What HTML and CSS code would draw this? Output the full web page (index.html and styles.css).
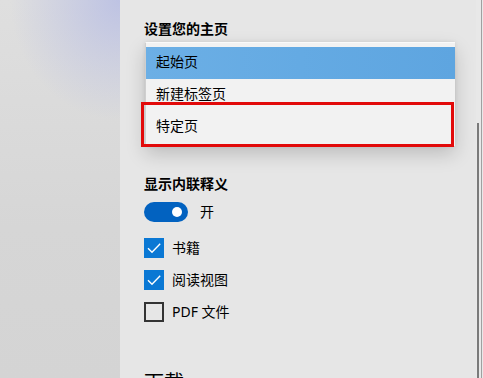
FILE: index.html
```html
<!DOCTYPE html>
<html lang="zh-CN">
<head>
<meta charset="utf-8">
<title>设置</title>
<link rel="stylesheet" href="styles.css">
</head>
<body>
<div class="screen">
  <div class="backdrop"></div>
  <main class="panel">
    <h2 class="heading">设置您的主页</h2>
    <div class="dropdown">
      <div class="option selected">起始页</div>
      <div class="option">新建标签页</div>
      <div class="option">特定页</div>
      <div class="highlight-box"></div>
    </div>

    <h2 class="heading heading-second">显示内联释义</h2>
    <div class="toggle-row">
      <span class="toggle"><span class="knob"></span></span>
      <span class="label">开</span>
    </div>
    <div class="checks">
      <label class="check-row">
        <span class="box checked">
          <svg viewBox="0 0 20 20" width="20" height="20"><path d="M4 10.2 L8 14.2 L16.2 5.8" fill="none" stroke="#fff" stroke-width="1.4"/></svg>
        </span>
        <span class="label">书籍</span>
      </label>
      <label class="check-row">
        <span class="box checked">
          <svg viewBox="0 0 20 20" width="20" height="20"><path d="M4 10.2 L8 14.2 L16.2 5.8" fill="none" stroke="#fff" stroke-width="1.4"/></svg>
        </span>
        <span class="label">阅读视图</span>
      </label>
      <label class="check-row">
        <span class="box"></span>
        <span class="label">PDF 文件</span>
      </label>
    </div>

    <h2 class="section-title">下载</h2>
  </main>
  <div class="scrollbar">
    <div class="thumb"></div>
    <div class="edge"></div>
  </div>
</div>
</body>
</html>
```

FILE: styles.css
```css
html, body {
  margin: 0;
  padding: 0;
  width: 483px;
  height: 378px;
  overflow: hidden;
}

body {
  font-family: "Noto Sans", "Noto Sans CJK SC", sans-serif;
  color: #000;
}

.screen {
  display: flex;
  width: 483px;
  height: 378px;
  overflow: hidden;
}

.backdrop {
  width: 120px;
  flex: none;
  background:
    radial-gradient(ellipse 110px 120px at 120px 0px, rgba(184, 190, 228, 0.85), rgba(184, 190, 228, 0) 100%),
    linear-gradient(180deg, #dfdfdf 0%, #d6d6d6 60%, #d4d4d4 100%);
}

.panel {
  width: 356px;
  flex: none;
  background: #e6e6e6;
  padding: 18px 0 0 24px;
  box-sizing: border-box;
  display: flex;
  flex-direction: column;
  align-items: flex-start;
}

.heading {
  margin: 0;
  font-size: 14px;
  line-height: 20px;
  font-weight: 600;
  font-family: "Noto Sans CJK SC", sans-serif;
}

.heading-second {
  margin-top: 27px;
}

.dropdown {
  position: relative;
  margin: 4px 0 0 1px;
  width: 310px;
  padding: 4px 0 3px;
  background: #f2f2f2;
  border-left: 1px solid #cfcfcf;
  box-sizing: border-box;
  box-shadow: 0 8px 18px rgba(0, 0, 0, 0.18), 0 0 4px rgba(0, 0, 0, 0.08);
  border-top: 1px solid #fafafa;
}

.option {
  height: 32px;
  line-height: 28px;
  padding-left: 10px;
  font-size: 14px;
  font-family: "Noto Sans CJK SC", sans-serif;
}

.option.selected {
  background: linear-gradient(90deg, #6cafe5 0%, #64aae3 50%, #5ea5e0 100%);
}

.highlight-box {
  position: absolute;
  left: -5px;
  top: 59px;
  width: 313px;
  height: 45px;
  border: 3px solid #e20a0a;
  box-sizing: border-box;
}

.toggle-row {
  display: flex;
  align-items: center;
  margin-top: 9px;
  height: 20px;
}

.toggle {
  width: 44px;
  height: 20px;
  border-radius: 10px;
  background: #0262c0;
  position: relative;
  display: flex;
  align-items: center;
  justify-content: flex-end;
  padding-right: 6px;
  box-sizing: border-box;
}

.knob {
  width: 10px;
  height: 10px;
  border-radius: 50%;
  background: #fff;
}

.toggle-row .label {
  margin-left: 12px;
}

.label {
  font-size: 14px;
  line-height: 20px;
}

.checks {
  display: flex;
  flex-direction: column;
  gap: 12px;
  margin-top: 16px;
}

.check-row {
  display: flex;
  align-items: center;
  height: 20px;
  gap: 8px;
}

.box {
  width: 20px;
  height: 20px;
  box-sizing: border-box;
  border: 2px solid #333;
  display: block;
}

.box.checked {
  border: none;
  background: #0a78d4;
}

.box svg {
  display: block;
}

.section-title {
  margin: 46px 0 0;
  font-size: 20px;
  line-height: 28px;
  font-weight: 400;
  font-family: "Noto Sans CJK SC", sans-serif;
}

.scrollbar {
  flex: 1;
  background: #e8e8e8;
  position: relative;
  display: flex;
}

.thumb {
  margin-left: 1px;
  margin-top: 123px;
  width: 2px;
  background: #7a7a7a;
}

.edge {
  margin-left: 2px;
  width: 1px;
  background: #a0a0a0;
}
```
